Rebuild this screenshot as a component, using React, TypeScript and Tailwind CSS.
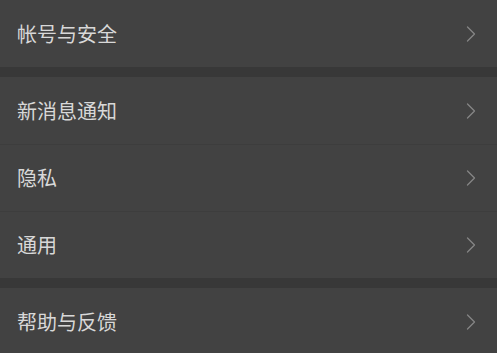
import { ChevronRight } from "lucide-react";

const groups = [["帐号与安全"], ["新消息通知", "隐私", "通用"], ["帮助与反馈"]];

function Row({ label, divider }: { label: string; divider: boolean }) {
  return (
    <div className={`flex h-[67px] items-center justify-between pl-[17px] pr-[12px] ${divider ? "border-t border-[#3d3d3d]" : ""}`}>
      <span className="text-[20px] text-[#d8d8d8]">{label}</span>
      <ChevronRight className="h-[28px] w-[28px] text-[#858585]" strokeWidth={1.1} />
    </div>
  );
}

export default function App() {
  return (
    <div
      className="flex h-[353px] w-[497px] flex-col gap-[10px] overflow-hidden bg-[#383838]"
      style={{ fontFamily: '"Noto Sans CJK SC", "Noto Sans", sans-serif' }}
    >
      {groups.map((items, gi) => (
        <div key={gi} className="shrink-0 bg-[#424242]">
          {items.map((label, i) => (
            <Row key={label} label={label} divider={i > 0} />
          ))}
        </div>
      ))}
    </div>
  );
}
